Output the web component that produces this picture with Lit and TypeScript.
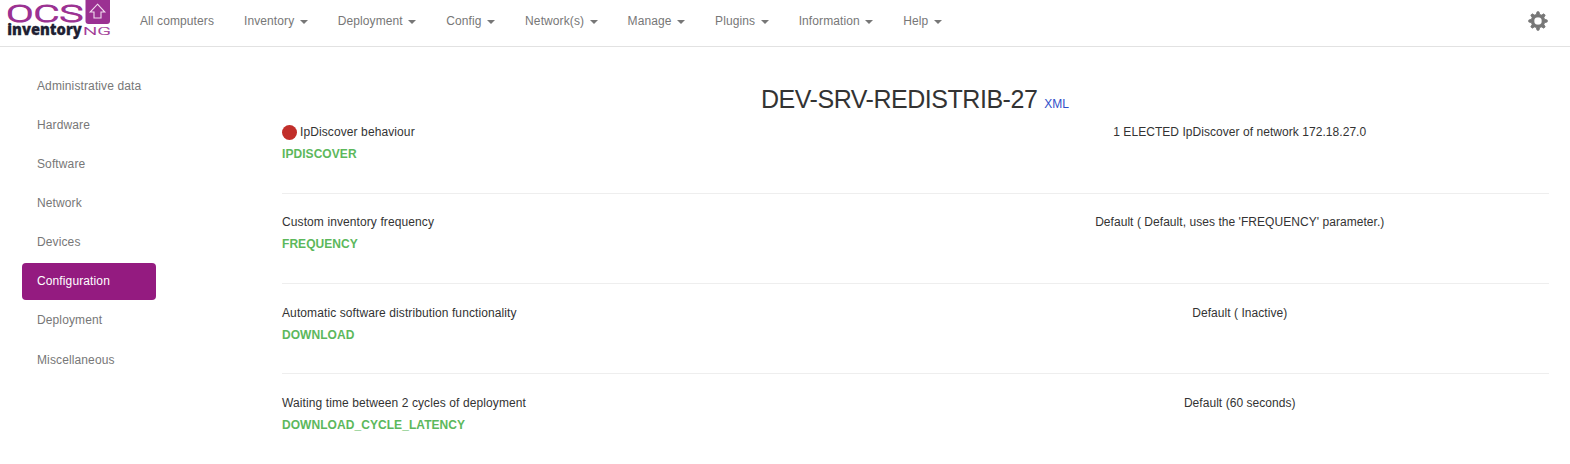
import { LitElement, html, css } from "lit";
import { customElement } from "lit/decorators.js";

const MENUS = ["All computers", "Inventory", "Deployment", "Config", "Network(s)", "Manage", "Plugins", "Information", "Help"];
const SECTIONS = ["Administrative data", "Hardware", "Software", "Network", "Devices", "Configuration", "Deployment", "Miscellaneous"];
const SETTINGS = [
  { label: "IpDiscover behaviour", key: "IPDISCOVER", value: "1 ELECTED IpDiscover of network 172.18.27.0", alert: true },
  { label: "Custom inventory frequency", key: "FREQUENCY", value: "Default ( Default, uses the 'FREQUENCY' parameter.)" },
  { label: "Automatic software distribution functionality", key: "DOWNLOAD", value: "Default ( Inactive)" },
  { label: "Waiting time between 2 cycles of deployment", key: "DOWNLOAD_CYCLE_LATENCY", value: "Default (60 seconds)" },
];

@customElement("ocs-navbar")
class OcsNavbar extends LitElement {
  static styles = css`
    :host { display: flex; height: 46px; border-bottom: 1px solid #e2e2e2; color: #777; }
    .logo { width: 125px; height: 46px; flex: none; }
    .menu { display: flex; height: 43px; align-items: center; letter-spacing: 0.1px; }
    .item { display: flex; align-items: center; padding: 0 15px; white-space: nowrap; }
    .caret { width: 0; height: 0; margin: 1px 0 0 5.5px; border: 4px solid transparent; border-top-color: #777; border-bottom: 0; }
    .gear { width: 20px; height: 20px; margin: 11px 22px 0 auto; }
  `;
  render() {
    return html`
      <svg class="logo" viewBox="0 0 125 46">
        <g fill="#9b3192" stroke="#9b3192" font-family="Roboto">
          <text x="6.3" y="22" textLength="77" lengthAdjust="spacingAndGlyphs" font-size="23" font-weight="300" stroke-width=".9">OCS</text>
          <text x="83" y="34.5" textLength="28" lengthAdjust="spacingAndGlyphs" font-size="10.5" font-weight="300" stroke-width=".2">NG</text>
        </g>
        <text x="7.3" y="35.4" textLength="74.5" lengthAdjust="spacingAndGlyphs" font-family="Open Sans" font-weight="800" font-size="15" fill="#1e1f33" stroke="#1e1f33" stroke-width=".3">inventory</text>
        <rect x="85.5" y="-4" width="24.5" height="28" rx="3" fill="#9b3192" />
        <path d="M97.5 4.2L104.8 12H101V18H94V12H90.2Z" fill="none" stroke="#f1dcee" stroke-width="1.1" />
      </svg>
      <nav class="menu">
        ${MENUS.map((m, i) => html`<span class="item">${m}${i ? html`<i class="caret"></i>` : ""}</span>`)}
      </nav>
      <svg class="gear" viewBox="-10 -10 20 20" fill="#777" stroke="#777" stroke-width=".8" stroke-linejoin="round">
        ${this.gear()}
      </svg>`;
  }
  gear() {
    const pts: string[] = [];
    for (let i = 0; i < 8; i++) {
      for (const [r, a] of [[6.8, -15], [9.3, -6], [9.3, 6], [6.8, 15]]) {
        const t = ((i * 45 + a) * Math.PI) / 180;
        pts.push(`${(r * Math.sin(t)).toFixed(2)} ${(-r * Math.cos(t)).toFixed(2)}`);
      }
    }
    const d = `M${pts.join("L")}ZM-4.1 0a4.1 4.1 0 1 0 8.2 0a4.1 4.1 0 1 0-8.2 0Z`;
    const path = document.createElementNS("http://www.w3.org/2000/svg", "path");
    path.setAttribute("d", d);
    path.setAttribute("fill-rule", "evenodd");
    return path;
  }
}

@customElement("app-root")
class AppRoot extends LitElement {
  static styles = css`
    :host { display: block; height: 464px; overflow: hidden; background: #fff; font: 12px/17.14px "Liberation Sans", Arial, sans-serif; color: #333; }
    .body { display: flex; padding-left: 22px; }
    .side { display: flex; flex-direction: column; gap: 2px; width: 134px; padding-top: 20.56px; letter-spacing: 0.12px; }
    .link { padding: 10px 15px; border-radius: 4px; color: #777; white-space: nowrap; }
    .active { background: #941b80; color: #fff; }
    .main { flex: 1; margin: 0 21px 0 126px; padding-top: 37px; }
    .title { display: flex; justify-content: center; align-items: baseline; gap: 7px; height: 37.3px; margin-left: -1px; line-height: 30px; }
    .name { font-size: 25px; letter-spacing: -0.47px; }
    .xml { color: #2f4fc9; }
    .row { display: grid; grid-template-columns: 1fr 1fr; margin-right: -10px; height: 71.9px; line-height: 22px; }
    .value { text-align: center; letter-spacing: 0.05px; }
    .label { display: flex; align-items: center; gap: 3px; letter-spacing: 0.1px; }
    .dot { width: 15px; height: 15px; border-radius: 50%; background: #c12e2a; }
    .key { font-weight: bold; color: #5cb85c; letter-spacing: 0.06px; }
    .rule { height: 1px; background: #eee; margin-bottom: 17.24px; }
  `;
  render() {
    return html`
      <ocs-navbar></ocs-navbar>
      <div class="body">
        <nav class="side">
          ${SECTIONS.map((s) => html`<span class="link ${s === "Configuration" ? "active" : ""}">${s}</span>`)}
        </nav>
        <main class="main">
          <div class="title"><span class="name">DEV-SRV-REDISTRIB-27</span><span class="xml">XML</span></div>
          ${SETTINGS.map((s, i) => html`
            ${i ? html`<div class="rule"></div>` : ""}
            <div class="row">
              <div>
                <div class="label">${s.alert ? html`<i class="dot"></i>` : ""}<span>${s.label}</span></div>
                <div class="key">${s.key}</div>
              </div>
              <div class="value">${s.value}</div>
            </div>`)}
        </main>
      </div>`;
  }
}
